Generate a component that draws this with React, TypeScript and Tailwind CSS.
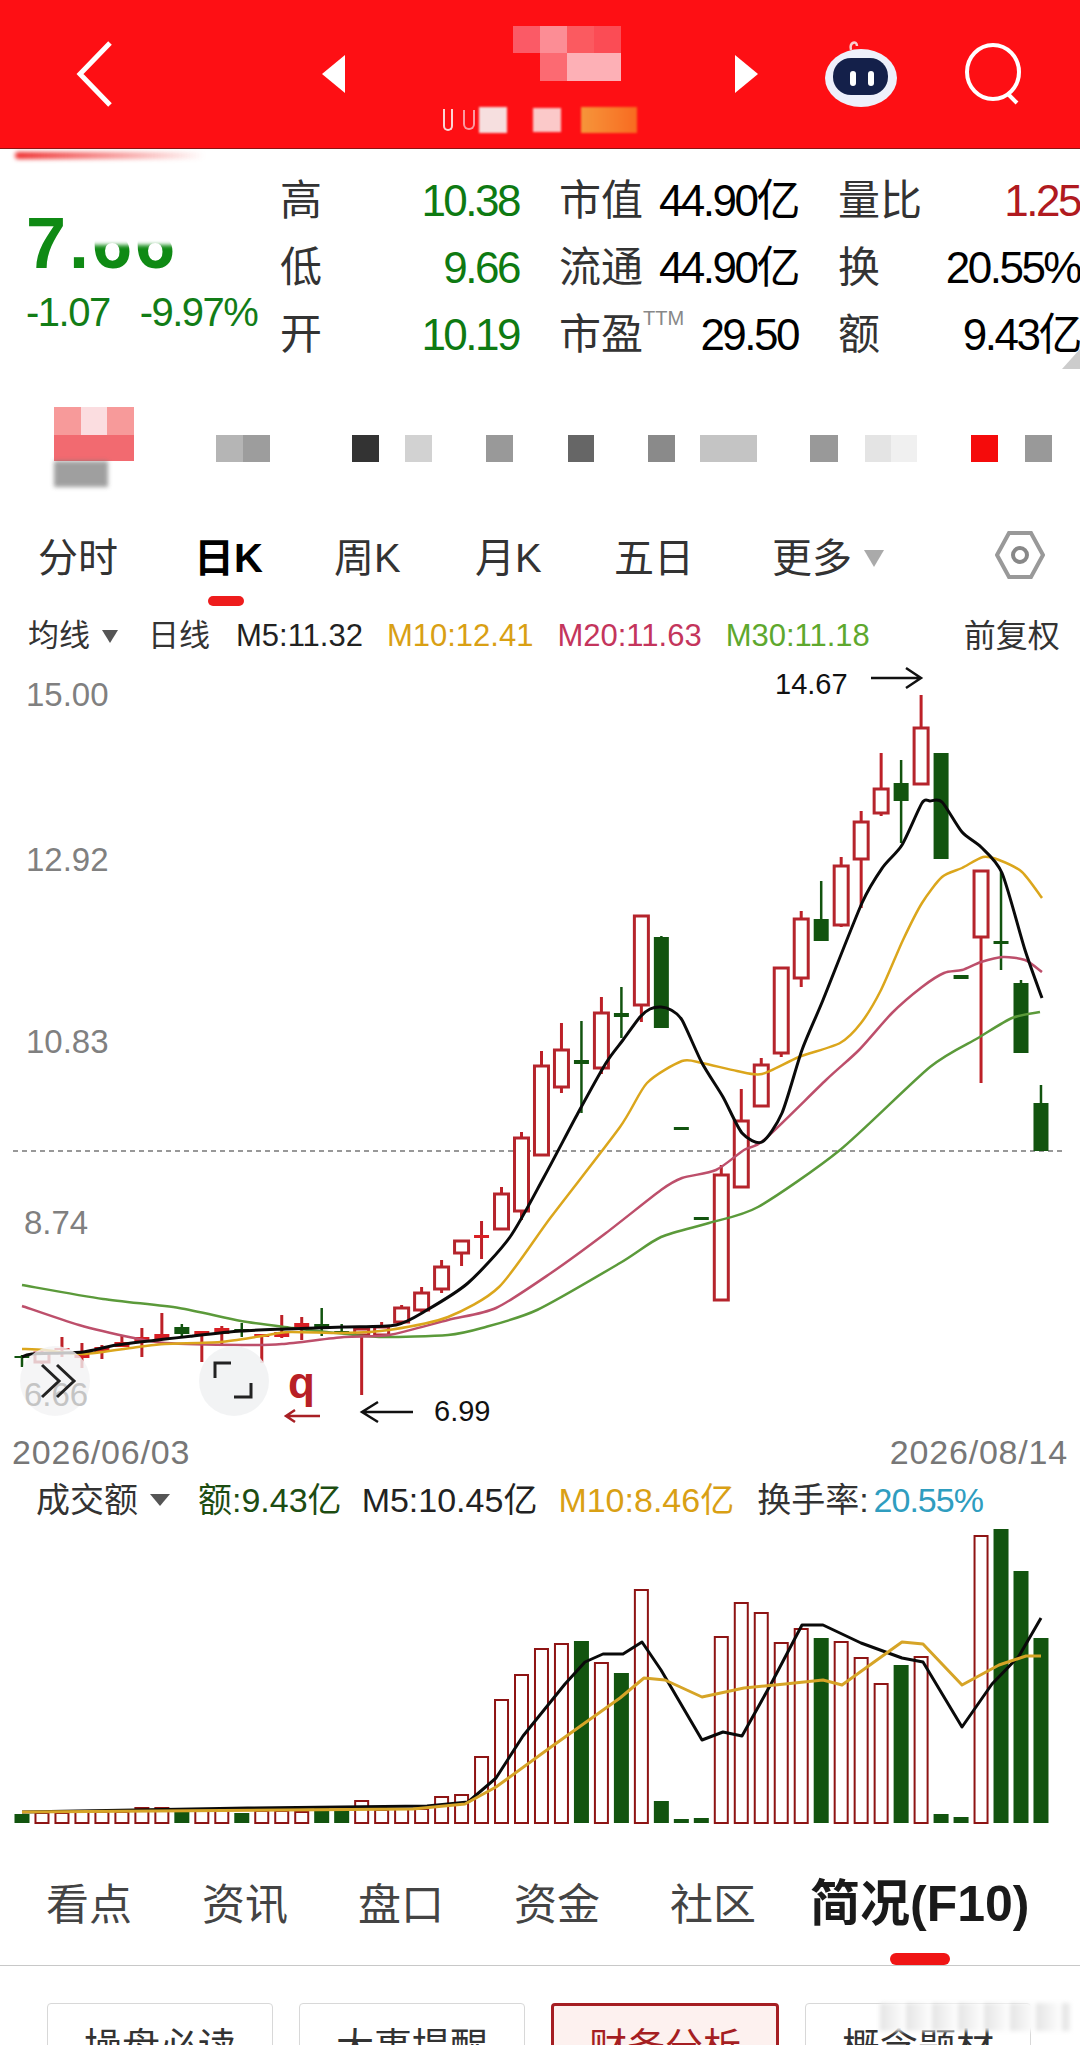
import React from 'react';

type Candle = [number, number, number, number, string];

// wick top, wick bottom, body top, body bottom, kind (r hollow, f filled red, g green)
const candles: Candle[] = [
  [1355, 1367, 1356, 1358, 'g'], [1351, 1364, 1353, 1362, 'r'], [1337, 1357, 1348, 1350, 'f'], [1343, 1368, 1352, 1358, 'f'],
  [1345, 1359, 1347, 1352, 'f'], [1335, 1347, 1342, 1347, 'f'], [1328, 1357, 1337, 1342, 'f'], [1313, 1340, 1334, 1340, 'f'],
  [1324, 1338, 1327, 1334, 'g'], [1331, 1362, 1331, 1335, 'f'], [1326, 1345, 1328, 1334, 'f'], [1323, 1337, 1329, 1331, 'g'],
  [1334, 1363, 1334, 1337, 'f'], [1315, 1338, 1332, 1337, 'f'], [1317, 1340, 1323, 1327, 'f'], [1308, 1336, 1324, 1327, 'g'],
  [1324, 1333, 1331, 1333, 'g'], [1329, 1395, 1329, 1335, 'r'], [1322, 1335, 1327, 1335, 'r'], [1305, 1322, 1308, 1322, 'r'],
  [1287, 1312, 1293, 1310, 'r'], [1260, 1293, 1267, 1289, 'r'], [1241, 1266, 1241, 1253, 'r'], [1221, 1259, 1235, 1238, 'f'],
  [1187, 1229, 1194, 1229, 'r'], [1132, 1220, 1138, 1211, 'r'], [1051, 1155, 1066, 1155, 'r'], [1023, 1093, 1050, 1087, 'r'],
  [1021, 1113, 1060, 1064, 'g'], [997, 1074, 1013, 1068, 'r'], [987, 1038, 1013, 1017, 'g'], [916, 1022, 916, 1005, 'r'],
  [936, 1028, 937, 1028, 'g'], [1127, 1130, 1127, 1130, 'g'], [1217, 1220, 1217, 1220, 'g'], [1165, 1300, 1175, 1300, 'r'],
  [1089, 1187, 1121, 1187, 'r'], [1058, 1106, 1065, 1106, 'r'], [968, 1057, 968, 1053, 'r'], [911, 987, 919, 978, 'r'],
  [881, 941, 919, 941, 'g'], [857, 927, 866, 925, 'r'], [811, 908, 822, 859, 'r'], [753, 816, 789, 813, 'r'],
  [760, 843, 783, 801, 'g'], [695, 784, 728, 784, 'r'], [753, 859, 753, 859, 'g'], [975, 979, 975, 979, 'g'],
  [871, 1083, 871, 937, 'r'], [872, 970, 941, 944, 'g'], [980, 1053, 983, 1053, 'g'], [1085, 1151, 1103, 1151, 'g'],
];

const volumes: [number, string][] = [
  [1814, 'g'], [1813, 'r'], [1813, 'r'], [1812, 'r'], [1812, 'r'], [1812, 'r'], [1808, 'r'], [1808, 'r'], [1812, 'g'], [1811, 'r'],
  [1810, 'r'], [1813, 'g'], [1811, 'r'], [1811, 'r'], [1812, 'r'], [1807, 'g'], [1809, 'g'], [1801, 'r'], [1810, 'r'], [1809, 'r'],
  [1809, 'r'], [1797, 'r'], [1795, 'r'], [1757, 'r'], [1700, 'r'], [1675, 'r'], [1649, 'r'], [1644, 'r'], [1641, 'g'], [1663, 'r'],
  [1673, 'g'], [1590, 'r'], [1801, 'g'], [1819, 'g'], [1818, 'g'], [1637, 'r'], [1603, 'r'], [1613, 'r'], [1643, 'r'], [1629, 'r'],
  [1638, 'g'], [1642, 'r'], [1658, 'r'], [1684, 'r'], [1665, 'g'], [1657, 'r'], [1814, 'g'], [1817, 'g'], [1536, 'r'], [1529, 'g'],
  [1571, 'g'], [1638, 'g'],
];

const ma5 = '22,1357 32,1354 83,1352 117,1345 193,1336 241,1331 286,1329 344,1327 396,1325 427,1310 468,1283 510,1237 544,1177 578,1113 606,1063 623,1040 640,1017 650,1009 661,1007 671,1010 682,1020 702,1063 723,1097 742,1133 762,1142 782,1113 802,1050 823,1000 862,903 883,867 902,845 922,803 930,801 942,802 962,832 981,847 1002,873 1025,950 1042,998';
const ma10 = '22,1349 45,1350 83,1354 138,1347 165,1344 220,1342 262,1336 289,1332 344,1333 389,1330 448,1317 499,1287 551,1217 620,1127 647,1083 682,1061 702,1063 737,1071 762,1074 799,1057 840,1043 861,1023 881,990 903,940 922,903 942,877 962,868 983,857 999,860 1022,872 1042,898';
const ma20 = '22,1306 79,1325 134,1338 165,1343 241,1345 282,1344 344,1337 389,1335 448,1320 496,1308 551,1273 606,1233 661,1190 682,1178 716,1170 744,1150 764,1140 826,1080 859,1050 892,1013 922,987 944,973 962,970 981,962 1003,957 1025,960 1042,972';
const ma30 = '22,1285 103,1299 179,1308 241,1321 293,1328 327,1332 379,1337 448,1335 482,1328 537,1310 620,1263 661,1237 709,1223 758,1207 840,1150 930,1067 978,1038 1012,1018 1040,1012';
const volMa5 = '22,1812 248,1808 427,1806 468,1802 496,1778 523,1736 565,1684 585,1662 603,1654 623,1654 642,1642 661,1670 702,1740 723,1732 742,1736 771,1684 802,1625 823,1625 861,1643 902,1658 923,1662 962,1727 992,1684 1019,1656 1041,1618';
const volMa10 = '22,1812 413,1809 465,1804 496,1787 551,1747 620,1698 644,1678 665,1680 702,1697 744,1688 785,1684 823,1680 842,1685 902,1642 923,1644 962,1685 999,1665 1026,1656 1041,1656';

const quoteRows = [
  { a: '高', av: '10.38', b: '市值', bv: '44.90亿', c: '量比', cv: '1.25', cc: 'text-[#b01a20]' },
  { a: '低', av: '9.66', b: '流通', bv: '44.90亿', c: '换', cv: '20.55%', cc: 'text-black' },
  { a: '开', av: '10.19', b: '市盈', bv: '29.50', c: '额', cv: '9.43亿', cc: 'text-black', ttm: true },
];

const blurBlocks = [
  'ml-[82px] w-[27px] bg-[#b5b5b5]', 'w-[27px] bg-[#9d9d9d]', 'ml-[82px] w-[27px] bg-[#333333]', 'ml-[26px] w-[27px] bg-[#d2d2d2]',
  'ml-[54px] w-[27px] bg-[#999999]', 'ml-[55px] w-[26px] bg-[#666666]', 'ml-[54px] w-[27px] bg-[#8a8a8a]', 'ml-[25px] w-[57px] bg-[#c4c4c4]',
  'ml-[53px] w-[28px] bg-[#999999]', 'ml-[27px] w-[26px] bg-[#e4e4e4]', 'w-[26px] bg-[#f0f0f0]', 'ml-[54px] w-[27px] bg-[#f50b0b]',
  'ml-[27px] w-[27px] bg-[#999999]',
];

const chartTabs = [
  { t: '分时', c: 'ml-[38px] w-[156px]' },
  { t: '日K', c: 'w-[140px] font-bold text-black' },
  { t: '周K', c: 'w-[141px]' },
  { t: '月K', c: 'w-[139px]' },
  { t: '五日', c: 'w-[159px]' },
];

const bottomTabs = ['看点', '资讯', '盘口', '资金', '社区'];
const chips = ['操盘必读', '大事提醒', '财务分析', '概念题材'];

const barX = (i: number) => 22 + i * 19.98;

// smooth a point list with catmull-rom segments
const smooth = (points: string) => {
  const p = points.split(' ').map((s) => s.split(',').map(Number));
  let d = `M${p[0][0]} ${p[0][1]}`;
  for (let i = 0; i < p.length - 1; i++) {
    const a = p[Math.max(i - 1, 0)];
    const b = p[i];
    const c = p[i + 1];
    const e = p[Math.min(i + 2, p.length - 1)];
    const c1x = b[0] + (c[0] - a[0]) / 8;
    const c1y = b[1] + (c[1] - a[1]) / 8;
    const c2x = c[0] - (e[0] - b[0]) / 8;
    const c2y = c[1] - (e[1] - b[1]) / 8;
    d += ` C${c1x} ${c1y} ${c2x} ${c2y} ${c[0]} ${c[1]}`;
  }
  return d;
};

const App = () => {
  return (
    <div className="h-[2045px] w-[1080px] overflow-hidden bg-white font-['Liberation_Sans','Noto_Sans_CJK_SC',sans-serif] text-[#333333]">
      {/* top bar */}
      <header className="flex h-[149px] items-center border-b border-[#8c1414] bg-[#fe0f14]">
        <svg className="ml-[74px]" width="42" height="68" viewBox="0 0 42 68">
          <path d="M36 3 L6 34 L36 65" fill="none" stroke="#fff" strokeWidth="5" strokeLinejoin="miter" />
        </svg>
        <svg className="ml-[206px]" width="24" height="38" viewBox="0 0 24 38">
          <path d="M23 0 L0 19 L23 38 Z" fill="#fff" />
        </svg>
        <div className="flex w-[388px] flex-col items-center pt-[10px]">
          <div className="ml-[54px] grid h-[55px] w-[108px] grid-cols-4 grid-rows-2">
            <div className="bg-[#fb5a66]" />
            <div className="bg-[#fc8d95]" />
            <div className="bg-[#fb5a60]" />
            <div className="bg-[#fb4c55]" />
            <div />
            <div className="bg-[#fc6a72]" />
            <div className="col-span-2 bg-[#fdb0b6]" />
          </div>
          <div className="mt-[26px] flex h-[26px] items-center">
            <div className="h-[22px] w-[10px] rounded-b-full border-2 border-t-0 border-[#fbd5d5]" />
            <div className="ml-[10px] h-[20px] w-[12px] rounded-b-full border-2 border-t-0 border-[#fb9aa0]" />
            <div className="ml-[4px] h-[26px] w-[28px] bg-[#f6dfdf] blur-[1px]" />
            <div className="ml-[26px] h-[24px] w-[28px] bg-[#fbc9c9] blur-[1px]" />
            <div className="ml-[20px] h-[26px] w-[56px] bg-gradient-to-r from-[#f6953a] to-[#f86a20] blur-[1px]" />
          </div>
        </div>
        <svg width="24" height="38" viewBox="0 0 24 38">
          <path d="M1 0 L24 19 L1 38 Z" fill="#fff" />
        </svg>
        <svg className="ml-[67px]" width="74" height="68" viewBox="0 0 74 68">
          <path d="M26 10 C24 2 32 0 32 6" fill="none" stroke="#f8d0d0" strokeWidth="2.5" />
          <ellipse cx="36" cy="38" rx="36" ry="29" fill="#eef0fb" />
          <rect x="8" y="18" width="55" height="37" rx="18" fill="#14204a" />
          <rect x="25" y="31" width="6" height="15" rx="3" fill="#fff" />
          <rect x="43" y="31" width="6" height="15" rx="3" fill="#fff" />
        </svg>
        <svg className="ml-[66px]" width="62" height="62" viewBox="0 0 62 62">
          <ellipse cx="28" cy="29" rx="26" ry="27" fill="none" stroke="#fff" strokeWidth="4" />
          <path d="M42 50 L52 60" stroke="#fff" strokeWidth="4" />
        </svg>
      </header>

      {/* quote block */}
      <section className="relative flex h-[251px]">
        <div className="absolute left-[15px] top-[3px] h-[7px] w-[190px] rounded-full bg-gradient-to-r from-[#ee2a2a] to-transparent blur-[2px]" />
        <div className="relative w-[281px] pl-[26px] pt-[58px]">
          <div className="text-[72px] font-bold leading-[72px] tracking-[3px] text-[#0f8a14]">7.66</div>
          <div className="absolute left-[84px] top-[58px] h-[38px] w-[110px] bg-white blur-[2px]" />
          <div className="mt-[12px] flex gap-[30px] whitespace-nowrap text-[40px] leading-[42px] tracking-[-1.5px] text-[#127d17]">
            <span>-1.07</span>
            <span>-9.97%</span>
          </div>
        </div>
        <div className="flex flex-col pt-[18px]">
          {quoteRows.map((r) => (
            <div key={r.a} className="grid h-[67px] grid-cols-[239px_239px_242px] items-center gap-x-[40px] text-[42px]">
              <div className="flex items-center justify-between">
                <span>{r.a}</span>
                <span className="text-[44px] tracking-[-2.5px] text-[#0e7a12]">{r.av}</span>
              </div>
              <div className="flex items-center justify-between whitespace-nowrap">
                <span>
                  {r.b}
                  {r.ttm && <sup className="align-[14px] text-[20px] font-normal text-[#888888]">TTM</sup>}
                </span>
                <span className="text-[44px] tracking-[-2.5px] text-black">{r.bv}</span>
              </div>
              <div className="flex items-center justify-between whitespace-nowrap">
                <span>{r.c}</span>
                <span className={`text-[44px] tracking-[-2.5px] ${r.cc}`}>{r.cv}</span>
              </div>
            </div>
          ))}
        </div>
        <div className="absolute bottom-[31px] right-0 h-0 w-0 border-b-[20px] border-l-[18px] border-b-[#cccccc] border-l-transparent" />
      </section>

      {/* blurred info row */}
      <section className="relative flex h-[100px] items-start">
        <div className="ml-[54px] mt-[7px] w-[80px]">
          <div className="grid h-[28px] grid-cols-3">
            <div className="bg-[#f79a9a]" />
            <div className="bg-[#fbdde0]" />
            <div className="bg-[#f79a9a]" />
          </div>
          <div className="h-[26px] bg-[#f26a70]" />
          <div className="h-[26px] w-[54px] bg-[#777777] opacity-70 blur-[2px]" />
        </div>
        <div className="mt-[35px] flex h-[27px] items-stretch">
          {blurBlocks.map((b) => (
            <div key={b} className={b} />
          ))}
        </div>
      </section>

      {/* period tabs */}
      <nav className="relative flex h-[112px] items-start pt-[36px] text-[40px] leading-[44px] text-[#333333]">
        {chartTabs.map((t) => (
          <div key={t.t} className={t.c}>
            {t.t}
          </div>
        ))}
        <div className="ml-[-1px]">更多</div>
        <div className="ml-[12px] mt-[14px] h-0 w-0 border-x-[10px] border-t-[17px] border-x-transparent border-t-[#aaaaaa]" />
        <svg className="ml-[111px] mt-[-6px]" width="50" height="50" viewBox="0 0 50 50">
          <path d="M14 3 H36 L48 25 L36 47 H14 L2 25 Z" fill="none" stroke="#999999" strokeWidth="4" />
          <circle cx="25" cy="25" r="7" fill="none" stroke="#888888" strokeWidth="4" />
        </svg>
        <div className="absolute left-[208px] top-[96px] h-[10px] w-[36px] rounded-full bg-[#ee1c1c]" />
      </nav>

      {/* moving average legend */}
      <div className="flex h-[48px] items-center whitespace-nowrap text-[31px]">
        <span className="ml-[28px]">均线</span>
        <div className="ml-[12px] h-0 w-0 border-x-[8px] border-t-[13px] border-x-transparent border-t-[#555555]" />
        <span className="ml-[30px]">日线</span>
        <span className="ml-[26px] text-[#222222]">M5:11.32</span>
        <span className="ml-[24px] text-[#d9a014]">M10:12.41</span>
        <span className="ml-[24px] text-[#c4355c]">M20:11.63</span>
        <span className="ml-[24px] text-[#5ea82e]">M30:11.18</span>
        <span className="ml-[94px] text-[32px]">前复权</span>
      </div>

      {/* candle chart */}
      <svg className="block" width="1080" height="770" viewBox="0 660 1080 770">
        <g fontFamily="Liberation Sans" fontSize="33" fill="#808080">
          <text x="26" y="706">15.00</text>
          <text x="26" y="871">12.92</text>
          <text x="26" y="1053">10.83</text>
          <text x="24" y="1234">8.74</text>
        </g>
        <line x1="13" y1="1151" x2="1065" y2="1151" stroke="#777777" strokeWidth="1.5" strokeDasharray="5 4" />
        {candles.map(([top, bottom, bodyTop, bodyBottom, kind], i) => {
          const x = barX(i);
          const green = kind === 'g';
          const color = green ? '#12540f' : '#bd2027';
          return (
            <g key={i}>
              <line x1={x} y1={top} x2={x} y2={bottom} stroke={color} strokeWidth={green ? 2.5 : 3} />
              {kind === 'r' ? (
                <rect x={x - 7} y={bodyTop} width="14" height={bodyBottom - bodyTop} fill="#fff" stroke="#b5242c" strokeWidth="3" />
              ) : (
                <rect x={x - 7.5} y={bodyTop} width="15" height={bodyBottom - bodyTop} fill={kind === 'f' ? '#d81f24' : '#12540f'} />
              )}
            </g>
          );
        })}
        <path d={smooth(ma30)} fill="none" stroke="#5b9a3a" strokeWidth="2.5" />
        <path d={smooth(ma20)} fill="none" stroke="#bd4f6b" strokeWidth="2.5" />
        <path d={smooth(ma10)} fill="none" stroke="#dba61c" strokeWidth="2.5" />
        <path d={smooth(ma5)} fill="none" stroke="#0a0a0a" strokeWidth="3" />

        {/* high and low markers */}
        <text x="775" y="694" fontFamily="Liberation Sans" fontSize="29" fill="#111111">14.67</text>
        <path d="M871 678 H921 M906 668 L921 678 L906 688" fill="none" stroke="#111111" strokeWidth="2.5" />
        <text x="434" y="1421" fontFamily="Liberation Sans" fontSize="29" fill="#111111">6.99</text>
        <path d="M413 1412 H362 M378 1402 L362 1412 L378 1422" fill="none" stroke="#111111" strokeWidth="2.5" />
        <text x="288" y="1398" fontFamily="Liberation Sans" fontSize="44" fontWeight="bold" fill="#b82025">q</text>
        <path d="M320 1416 H286 M295 1410 L286 1416 L295 1422" fill="none" stroke="#a82025" strokeWidth="2.5" />

        {/* floating buttons */}
        <circle cx="55" cy="1381" r="35" fill="#f2f3f4" opacity="0.8" />
        <text x="24" y="1406" fontFamily="Liberation Sans" fontSize="33" fill="#c4c4c4">6.66</text>
        <path d="M42 1365 L59 1381 L42 1397 M57 1365 L74 1381 L57 1397" fill="none" stroke="#222222" strokeWidth="3" />
        <circle cx="234" cy="1381" r="35" fill="#f1f2f3" opacity="0.9" />
        <path d="M231 1363 H215 V1378 M234 1397 H251 V1383" fill="none" stroke="#222222" strokeWidth="3" />
      </svg>

      {/* date range */}
      <div className="flex h-[45px] items-center justify-between px-[12px] text-[34px] tracking-[0.8px] text-[#777777]">
        <span>2026/06/03</span>
        <span>2026/08/14</span>
      </div>

      {/* turnover legend */}
      <div className="flex h-[50px] items-center whitespace-nowrap text-[34px]">
        <span className="ml-[36px]">成交额</span>
        <div className="ml-[12px] h-0 w-0 border-x-[10px] border-t-[12px] border-x-transparent border-t-[#555555]" />
        <span className="ml-[28px] text-[#1d4d12]">额:9.43亿</span>
        <span className="ml-[20px] text-[#222222]">M5:10.45亿</span>
        <span className="ml-[21px] text-[#d9a014]">M10:8.46亿</span>
        <span className="ml-[23px]">换手率:</span>
        <span className="ml-[5px] tracking-[-1px] text-[#2f9dbf]">20.55%</span>
      </div>

      {/* turnover bars */}
      <svg className="block" width="1080" height="305" viewBox="0 1525 1080 305">
        {volumes.map(([top, kind], i) => {
          const x = barX(i);
          return kind === 'g' ? (
            <rect key={i} x={x - 7.5} y={top} width="15" height={1823 - top} fill="#12540f" />
          ) : (
            <rect key={i} x={x - 6.5} y={top} width="13" height={1823 - top} fill="#fff" stroke="#8e1414" strokeWidth="2" />
          );
        })}
        <polyline points={volMa5} fill="none" stroke="#0a0a0a" strokeWidth="3" strokeLinejoin="round" />
        <polyline points={volMa10} fill="none" stroke="#d6a427" strokeWidth="3" strokeLinejoin="round" />
      </svg>

      {/* bottom tabs */}
      <nav className="relative flex h-[136px] items-start border-b border-[#c8c8c8] pt-[50px] text-[43px] leading-[50px] text-[#444444]">
        <div className="flex w-[810px] gap-[70px] pl-[46px]">
          {bottomTabs.map((t) => (
            <span key={t} className="w-[86px] whitespace-nowrap">
              {t}
            </span>
          ))}
        </div>
        <span className="mt-[-1px] text-[50px] font-bold text-[#1a1a1a]">简况(F10)</span>
        <div className="absolute bottom-0 left-[890px] h-[12px] w-[60px] rounded-full bg-[#f01515]" />
      </nav>

      {/* sub tabs */}
      <div className="relative flex gap-[26px] pl-[47px] pt-[37px]">
        {chips.map((c, i) => (
          <div
            key={c}
            className={
              i === 2
                ? 'flex h-[88px] w-[228px] shrink-0 items-center justify-center rounded-[4px] border-[3px] border-[#a51e22] bg-[#fdf1ef] text-[38px] text-[#a51e22]'
                : 'flex h-[88px] w-[226px] shrink-0 items-center justify-center rounded-[4px] border border-[#d8d8d8] bg-white text-[38px] text-[#333333]'
            }
          >
            {c}
          </div>
        ))}
        <div className="absolute left-[880px] top-[37px] h-[28px] w-[190px] bg-[repeating-linear-gradient(90deg,#e4e4e4_0px,#ffffff_26px)] blur-[2px]" />
      </div>
    </div>
  );
};

export default App;
